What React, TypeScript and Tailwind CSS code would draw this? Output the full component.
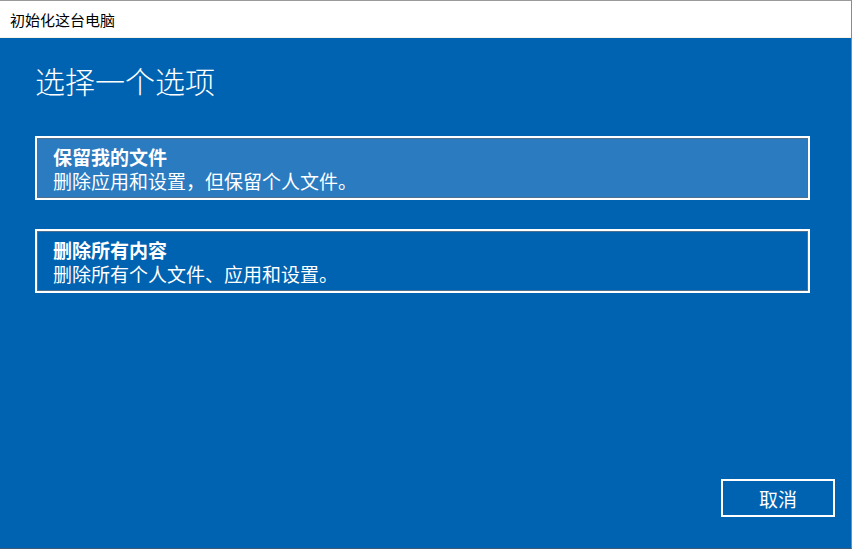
import React, { useState } from 'react';

const cjk = { fontFamily: '"Noto Sans CJK SC", "Noto Sans", sans-serif' };

interface ResetOption {
  id: string;
  title: string;
  description: string;
}

const options: ResetOption[] = [
  { id: 'keep', title: '保留我的文件', description: '删除应用和设置，但保留个人文件。' },
  { id: 'remove', title: '删除所有内容', description: '删除所有个人文件、应用和设置。' }
];

const OptionCard: React.FC<{ option: ResetOption; active: boolean; onHover: () => void }> = ({
  option,
  active,
  onHover
}) => (
  <button
    onMouseEnter={onHover}
    className={`w-[775px] h-[64px] border-2 border-white text-left pl-[16px] pt-[7px] pb-[5px] text-white shadow-[inset_0_0_0_1px_#4f6f8f] ${
      active ? 'bg-[#2a7bc0]' : 'bg-[#0063b1]'
    }`}
  >
    <div className="text-[19px] leading-[24px] font-bold">{option.title}</div>
    <div className="text-[19px] leading-[24px]">{option.description}</div>
  </button>
);

export default function App() {
  const [hovered, setHovered] = useState('keep');

  return (
    <div
      className="w-[852px] h-[549px] flex flex-col bg-[#0063b1] border-t border-[#9a9a9a] border-r border-r-[#8a8a8a] border-b border-b-[#3a5a7a] overflow-hidden"
      style={cjk}
    >
      <div className="h-[37px] bg-white flex items-center pl-[10px] border-b border-[#fbf3e6] shrink-0">
        <span className="text-[15px] leading-none text-black">初始化这台电脑</span>
      </div>

      <div className="flex-1 flex flex-col pl-[35px] pt-[27px]">
        <h1 className="text-[30px] leading-none font-light text-white">选择一个选项</h1>

        <div className="mt-[41px] flex flex-col gap-[29px]">
          {options.map((option) => (
            <OptionCard
              key={option.id}
              option={option}
              active={hovered === option.id}
              onHover={() => setHovered(option.id)}
            />
          ))}
        </div>

        <div className="flex-1" />

        <div className="flex justify-end pr-[16px] pb-[31px]">
          <button className="w-[114px] h-[38px] border-2 border-white text-white text-[19px] leading-none flex items-center justify-center">
            取消
          </button>
        </div>
      </div>
    </div>
  );
}
